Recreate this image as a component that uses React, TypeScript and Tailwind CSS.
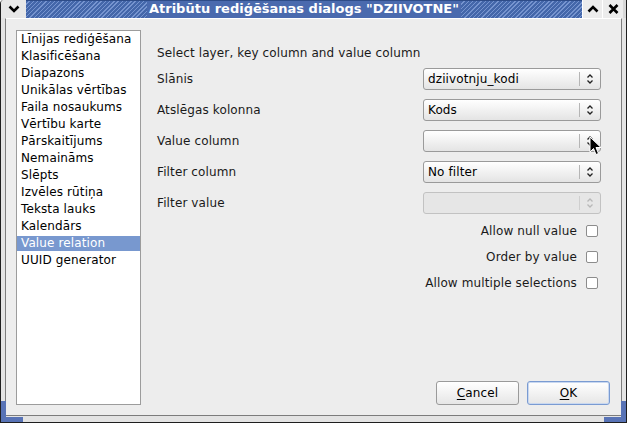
import React from "react";

const widgetTypes = [
  "Līnijas rediģēšana",
  "Klasificēšana",
  "Diapazons",
  "Unikālas vērtības",
  "Faila nosaukums",
  "Vērtību karte",
  "Pārskaitījums",
  "Nemaināms",
  "Slēpts",
  "Izvēles rūtiņa",
  "Teksta lauks",
  "Kalendārs",
  "Value relation",
  "UUID generator",
];

const hatch =
  "bg-[repeating-linear-gradient(135deg,#4467aa_0px,#4467aa_2px,#7694cf_2px,#7694cf_3px)]";

const Arrows = ({ disabled }: { disabled?: boolean }) => (
  <svg width="8" height="12" viewBox="0 0 8 12">
    <path
      d="M1.5 4.5 L4 2 L6.5 4.5 M1.5 7.5 L4 10 L6.5 7.5"
      fill="none"
      stroke={disabled ? "#b8b8b8" : "#222"}
      strokeWidth="1.3"
    />
  </svg>
);

const Combo = ({ value, disabled }: { value?: string; disabled?: boolean }) => (
  <div
    className={
      disabled
        ? "w-[178px] h-[22px] flex items-center rounded-[3px] border border-[#c2c2c2] bg-[#e6e6e6]"
        : "w-[178px] h-[22px] flex items-center rounded-[3px] border border-[#9a9a9a] bg-gradient-to-b from-white to-[#e4e4e4]"
    }
  >
    <span className="flex-1 pl-[4px] text-[12px] leading-[16px] text-black">{value}</span>
    <span className={disabled ? "h-[14px] w-px bg-[#cfcfcf]" : "h-[14px] w-px bg-[#b5b5b5]"} />
    <span className="w-[20px] flex items-center justify-center">
      <Arrows disabled={disabled} />
    </span>
  </div>
);

const Row = ({ label, children }: { label: string; children: React.ReactNode }) => (
  <div className="flex items-center justify-between h-[22px]">
    <span className="text-[12px] leading-[16px] text-[#1a1a1a]">{label}</span>
    {children}
  </div>
);

const Check = ({ label }: { label: string }) => (
  <div className="flex items-center justify-end gap-[9px] h-[16px] pr-[3px]">
    <span className="text-[12px] leading-[16px] text-[#1a1a1a]">{label}</span>
    <span className="w-[12px] h-[12px] rounded-[2px] border border-[#8c8c8c] bg-white" />
  </div>
);

const Button = ({ first, rest, primary }: { first: string; rest: string; primary?: boolean }) => (
  <div
    className={
      primary
        ? "w-[83px] h-[24px] flex items-center justify-center rounded-[3px] border border-[#7a9bd2] bg-gradient-to-b from-white to-[#e6e6e6] shadow-[inset_0_0_0_1px_#c9d8f0]"
        : "w-[83px] h-[24px] flex items-center justify-center rounded-[3px] border border-[#9a9a9a] bg-gradient-to-b from-white to-[#e6e6e6]"
    }
  >
    <span className="text-[12px] leading-[16px] text-black">
      <span className="underline underline-offset-2">{first}</span>
      {rest}
    </span>
  </div>
);

export default function App() {
  return (
    <div className="relative w-[627px] h-[423px] overflow-hidden flex flex-col bg-[#e3e3e3] border-x border-b border-[#1e1e1e] rounded-tl-[4px] font-['DejaVu_Sans',sans-serif] tracking-[0.12px]">
      {/* title bar */}
      <div className="flex h-[18px] shrink-0">
        <div className="w-[25px] flex items-center justify-center bg-[#e8e8e8]">
          <svg width="12" height="8" viewBox="0 0 12 8">
            <path d="M1.5 1.5 L6 6 L10.5 1.5" fill="none" stroke="#000" strokeWidth="2.6" />
          </svg>
        </div>
        <div className="flex-1 flex border-t border-[#2e4c88] bg-[#4a6aae]">
          <div className={`flex-1 ${hatch}`} />
          <div className="px-[2px] text-white font-bold text-[13px] leading-[16px] tracking-normal whitespace-nowrap">
            Atribūtu rediģēšanas dialogs "DZIIVOTNE"
          </div>
          <div className={`flex-1 ${hatch}`} />
        </div>
        <div className="w-[20px] flex items-center justify-center bg-[#ececec] border-l border-white">
          <svg width="12" height="8" viewBox="0 0 12 8">
            <path d="M1.5 6.5 L6 2 L10.5 6.5" fill="none" stroke="#000" strokeWidth="2.6" />
          </svg>
        </div>
        <div className="w-[21px] flex items-center justify-center bg-[#ececec] border-l border-white">
          <svg width="11" height="10" viewBox="0 0 11 10">
            <path d="M1.5 1 L9.5 9 M9.5 1 L1.5 9" stroke="#000" strokeWidth="2.6" />
          </svg>
        </div>
        <div className="w-[3px] bg-[#d8d8d8]" />
      </div>

      {/* dialog body */}
      <div className="flex-1 flex ml-[4px] mr-[4px] mb-[6px] border-x border-b border-t border-t-white border-x-[#7c7c7c] border-b-[#7c7c7c] bg-[#ededed] pl-[10px] pt-[11px] pr-[11px] pb-[10px]">
        <div className="w-[125px] pt-[1px] border border-[#9c9c9c] bg-white">
          {widgetTypes.map((t) => (
            <div
              key={t}
              className={
                t === "Value relation"
                  ? "h-[15px] mb-[2px] pl-[4px] text-[12px] leading-[15px] whitespace-nowrap bg-[#7898cf] text-white"
                  : "h-[15px] mb-[2px] pl-[4px] text-[12px] leading-[15px] whitespace-nowrap text-black"
              }
            >
              {t}
            </div>
          ))}
        </div>

        <div className="flex-1 flex flex-col pl-[16px]">
          <div className="flex flex-col pr-[9px]">
            <div className="mt-[15px] h-[16px] text-[12px] leading-[16px] text-[#1a1a1a]">
              Select layer, key column and value column
            </div>
            <div className="mt-[7px] flex flex-col gap-[9px]">
              <Row label="Slānis">
                <Combo value="dziivotnju_kodi" />
              </Row>
              <Row label="Atslēgas kolonna">
                <Combo value="Kods" />
              </Row>
              <Row label="Value column">
                <Combo />
              </Row>
              <Row label="Filter column">
                <Combo value="No filter" />
              </Row>
              <Row label="Filter value">
                <Combo disabled />
              </Row>
            </div>
            <div className="mt-[9px] flex flex-col gap-[10px]">
              <Check label="Allow null value" />
              <Check label="Order by value" />
              <Check label="Allow multiple selections" />
            </div>
          </div>
          <div className="mt-auto flex justify-end gap-[8px]">
            <Button first="C" rest="ancel" />
            <Button first="O" rest="K" primary />
          </div>
        </div>
      </div>

      {/* resize corners */}
      <div className="absolute left-0 bottom-0 w-[5px] h-[21px] bg-[#5873b6]" />
      <div className="absolute left-0 bottom-0 w-[22px] h-[5px] bg-[#5873b6]" />
      <div className="absolute right-0 bottom-0 w-[5px] h-[21px] bg-[#5873b6]" />
      <div className="absolute right-0 bottom-0 w-[22px] h-[5px] bg-[#5873b6]" />

      {/* mouse pointer */}
      <svg className="absolute left-[588px] top-[136px]" width="13" height="20" viewBox="0 0 13 20">
        <path d="M1 1 L1 16 L4.5 12.5 L7 18.5 L9.5 17.5 L7 11.5 L12 11.5 Z" fill="#000" stroke="#fff" strokeWidth="1" />
      </svg>
    </div>
  );
}
